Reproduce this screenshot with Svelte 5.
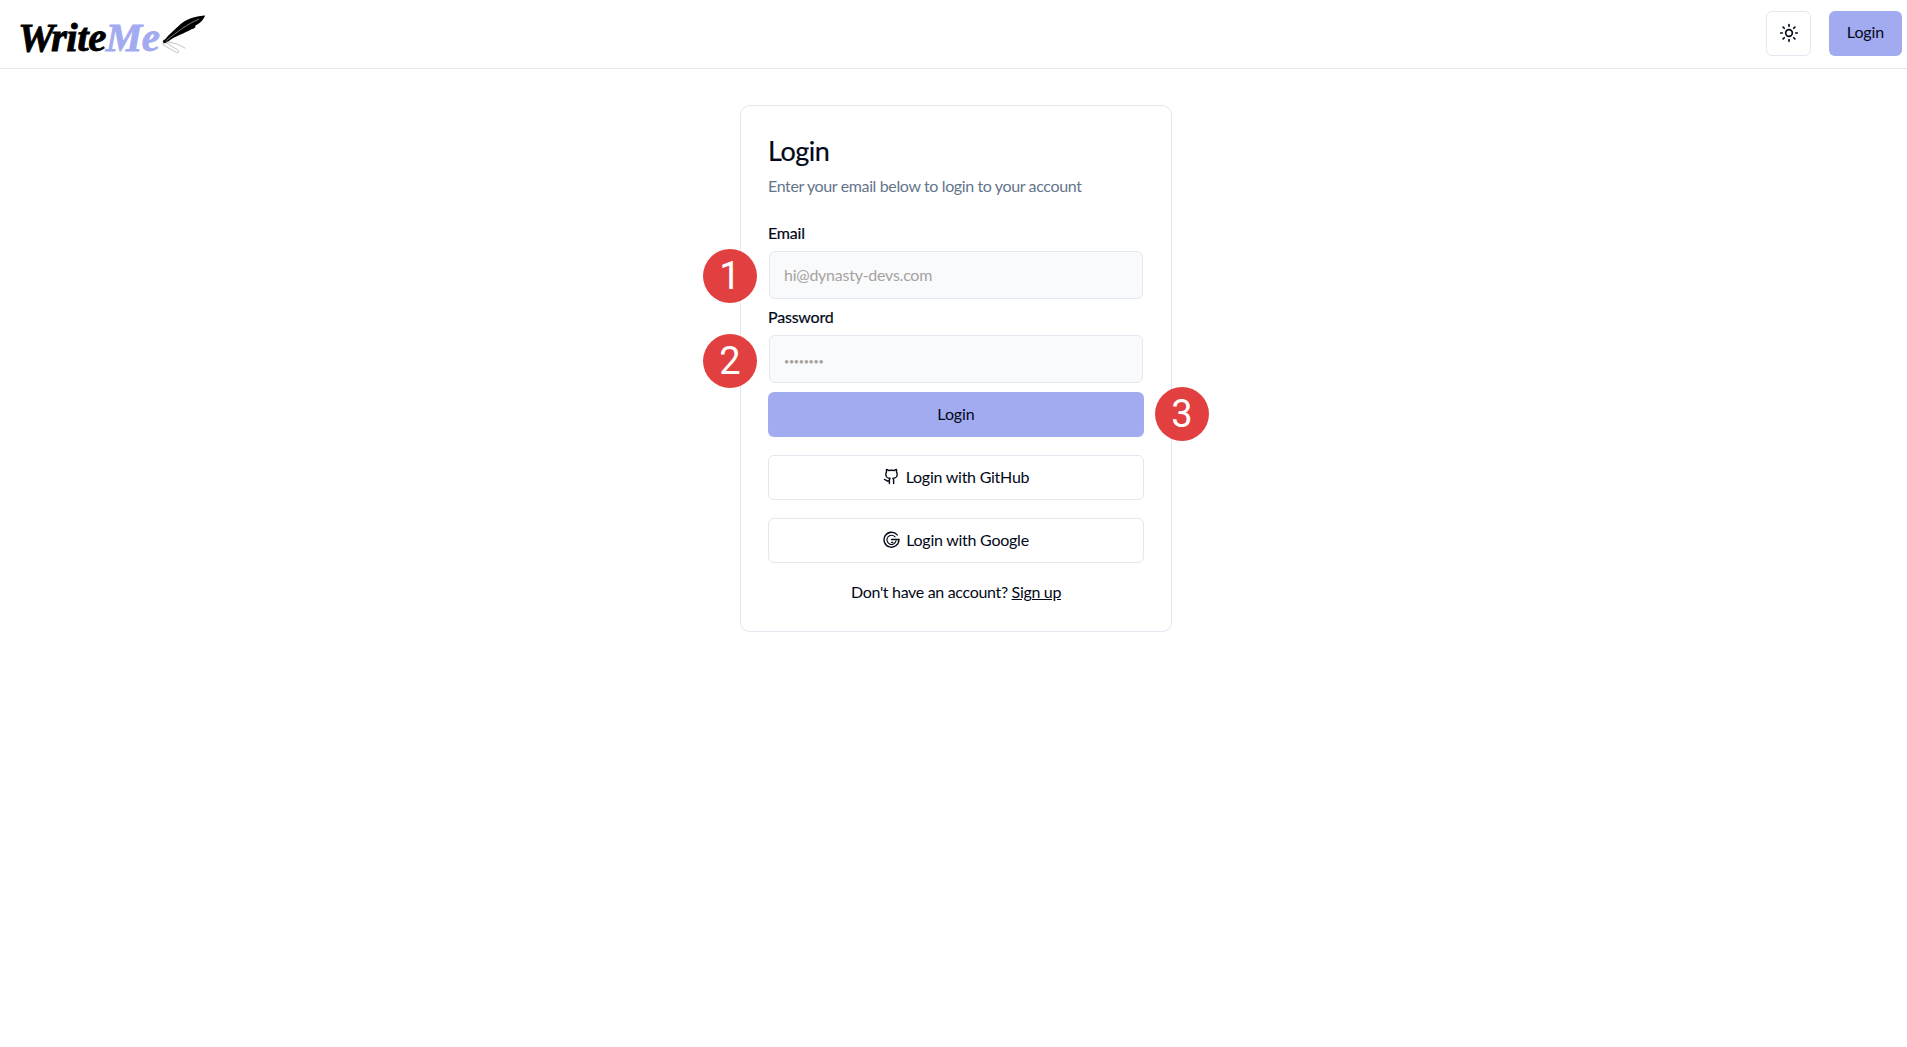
<script>
  let email = ''
  let password = ''
</script>

<header class="topbar">
  <a class="logo" href="#top">
    <span class="logo-text">Write<span class="logo-me">Me</span></span>
    <svg class="quill" viewBox="0 0 60 50" width="52" height="43" aria-hidden="true">
      <path d="M10 31 C14 25 20 21 26 15 C34 7 48 3 57 3 C55 8 50 13 45 15 C47 16 44 18 41 19 C33 24 23 26 13 34 Z" fill="#000"/>
      <path d="M12 32 C24 22 36 13 50 7" fill="none" stroke="#ccc" stroke-width="0.7"/>
      <path d="M11 34 L25 43 C28 46 25 47 22 45 L8 37 C7 35 9 33 11 34 M12 33 L24 36 L34 41" fill="none" stroke="#999" stroke-width="0.7"/>
      <circle cx="10" cy="33" r="2.2" fill="#111"/>
    </svg>
  </a>
  <div class="top-actions">
    <button class="theme-btn" type="button" aria-label="Toggle theme">
      <svg viewBox="0 0 24 24" width="20" height="20" fill="none" stroke="currentColor" stroke-width="2" stroke-linecap="round" stroke-linejoin="round">
        <circle cx="12" cy="12" r="4"/>
        <path d="M12 2v2M12 20v2M4.93 4.93l1.41 1.41M17.66 17.66l1.41 1.41M2 12h2M20 12h2M6.34 17.66l-1.41 1.41M19.07 4.93l-1.41 1.41"/>
      </svg>
    </button>
    <button class="top-login" type="button"><span>Login</span></button>
  </div>
</header>

<main class="page">
  <section class="card">
    <h1>Login</h1>
    <p class="sub">Enter your email below to login to your account</p>

    <label class="label" for="email">Email</label>
    <div class="field">
      <span class="badge badge-left">1</span>
      <input id="email" type="email" placeholder="hi@dynasty-devs.com" bind:value={email} />
    </div>

    <label class="label label-pass" for="password">Password</label>
    <div class="field">
      <span class="badge badge-left badge-pass">2</span>
      <input id="password" type="password" placeholder="••••••••" class="pass" bind:value={password} />
    </div>

    <div class="field submit-wrap">
      <button class="submit" type="button">Login</button>
      <span class="badge badge-right">3</span>
    </div>

    <button class="outline" type="button">
      <svg viewBox="0 0 24 24" width="17" height="17" fill="none" stroke="currentColor" stroke-width="2" stroke-linecap="round" stroke-linejoin="round">
        <path d="M15 22v-4a4.8 4.8 0 0 0-1-3.5c3 0 6-2 6-5.5.08-1.25-.27-2.48-1-3.5.28-1.15.28-2.35 0-3.5 0 0-1 0-3 1.5-2.64-.5-5.36-.5-8 0C6 2 5 2 5 2c-.3 1.15-.3 2.35 0 3.5A5.4 5.4 0 0 0 4 9c0 3.5 3 5.5 6 5.5-.39.49-.68 1.05-.85 1.65-.17.6-.22 1.23-.15 1.85v4"/>
        <path d="M9 18c-4.51 2-5-2-7-2"/>
      </svg>
      Login with GitHub
    </button>

    <button class="outline" type="button">
      <svg viewBox="0 0 24 24" width="17" height="17" fill="none" stroke="currentColor" stroke-width="2" stroke-linecap="round">
        <path d="M20 5.5A10.5 10.5 0 1 0 22.5 12H12"/>
        <path d="M17 8.2A6.5 6.5 0 1 0 18.4 14" stroke-width="1.6"/>
        <path d="M12 16h2" stroke-width="1.6"/>
      </svg>
      Login with Google
    </button>

    <p class="foot">Don't have an account? <a href="#top">Sign up</a></p>
  </section>
</main>

<style>
  :global(body) {
    margin: 0;
    background: #fff;
    color: #020817;
    font-family: Lato, "Open Sans", sans-serif;
  }

  .topbar {
    height: 68px;
    border-bottom: 1px solid #e2e8f0;
    display: flex;
    align-items: center;
    justify-content: space-between;
    padding: 0 5px 0 18px;
  }

  .logo {
    display: flex;
    align-items: flex-start;
    text-decoration: none;
    color: #000;
    height: 44px;
  }
  .logo-text {
    font-family: "Liberation Serif", serif;
    font-style: italic;
    font-weight: 700;
    font-size: 41px;
    line-height: 44px;
    margin-top: 3px;
    letter-spacing: -0.5px;
    -webkit-text-stroke: 0.8px currentColor;
  }
  .logo-me { color: #a2aaf0; }
  .quill { margin-left: -4px; margin-top: 1px; }

  .top-actions { display: flex; align-items: center; gap: 18px; margin-top: -2px; }

  .theme-btn {
    width: 45px;
    height: 45px;
    background: #fff;
    border: 1px solid #e2e8f0;
    border-radius: 6px;
    color: #020817;
    display: flex;
    align-items: center;
    justify-content: center;
    padding: 0;
  }

  .top-login {
    width: 73px;
    height: 45px;
    padding: 0 0 3px;
    background: #a2aaf0;
    border: none;
    border-radius: 6px;
    color: #020817;
    font: 400 16px Lato, sans-serif;
    letter-spacing: -0.1px;
  }

  .page {
    display: flex;
    justify-content: center;
    padding: 36px 0 0 5px;
  }

  .card {
    width: 376px;
    padding: 27px 27px 27px;
    border: 1px solid #e2e8f0;
    border-radius: 10px;
    box-shadow: 0 1px 2px rgba(0, 0, 0, 0.04);
    display: flex;
    flex-direction: column;
  }

  h1 {
    margin: 0;
    font-size: 27px;
    line-height: 35px;
    font-weight: 400;
    letter-spacing: -0.45px;
    -webkit-text-stroke: 0.2px currentColor;
  }

  .sub {
    margin: 6px 0 0;
    font-size: 16px;
    line-height: 24px;
    letter-spacing: -0.37px;
    color: #64748b;
  }

  .label {
    margin-top: 25px;
    margin-bottom: 8px;
    font-size: 16px;
    line-height: 20px;
    font-weight: 400;
    -webkit-text-stroke: 0.2px currentColor;
    letter-spacing: -0.2px;
  }
  .label-pass { margin-top: 8px; }

  .field { position: relative; }

  input {
    display: block;
    box-sizing: border-box;
    width: 374px;
    height: 48px;
    margin-left: 1px;
    padding: 0 14px 2px;
    background: #f8fafc;
    border: 1px solid #e2e8f0;
    border-radius: 6px;
    font: 16px Lato, sans-serif;
    letter-spacing: -0.25px;
    color: #020817;
    outline: none;
  }
  input::placeholder { color: #a8a29e; opacity: 1; }
  .pass::placeholder { font-size: 9px; letter-spacing: -0.3px; }

  .badge {
    position: absolute;
    width: 54px;
    height: 54px;
    border-radius: 50%;
    background: #e24040;
    color: #fff;
    font: 400 38px/54px Roboto, sans-serif;
    text-align: center;
    top: -2px;
  }
  .badge-left { left: -65px; }
  .badge-pass { top: -1px; }
  .badge-right { left: 387px; top: -5px; }

  .submit-wrap { margin-top: 9px; }

  .submit {
    display: block;
    width: 100%;
    height: 45px;
    padding: 0 0 2px;
    background: #a2aaf0;
    border: none;
    border-radius: 6px;
    color: #020817;
    font: 400 16px Lato, sans-serif;
    letter-spacing: -0.1px;
  }

  .outline {
    margin-top: 18px;
    height: 45px;
    padding: 0 0 2px;
    background: #fff;
    border: 1px solid #e2e8f0;
    border-radius: 6px;
    color: #020817;
    font: 400 16px Lato, sans-serif;
    letter-spacing: -0.25px;
    display: flex;
    align-items: center;
    justify-content: center;
    gap: 6px;
  }

  .foot {
    margin: 17px 0 0;
    font-size: 16px;
    line-height: 24px;
    letter-spacing: -0.32px;
    text-align: center;
  }
  .foot a { color: inherit; }
</style>
